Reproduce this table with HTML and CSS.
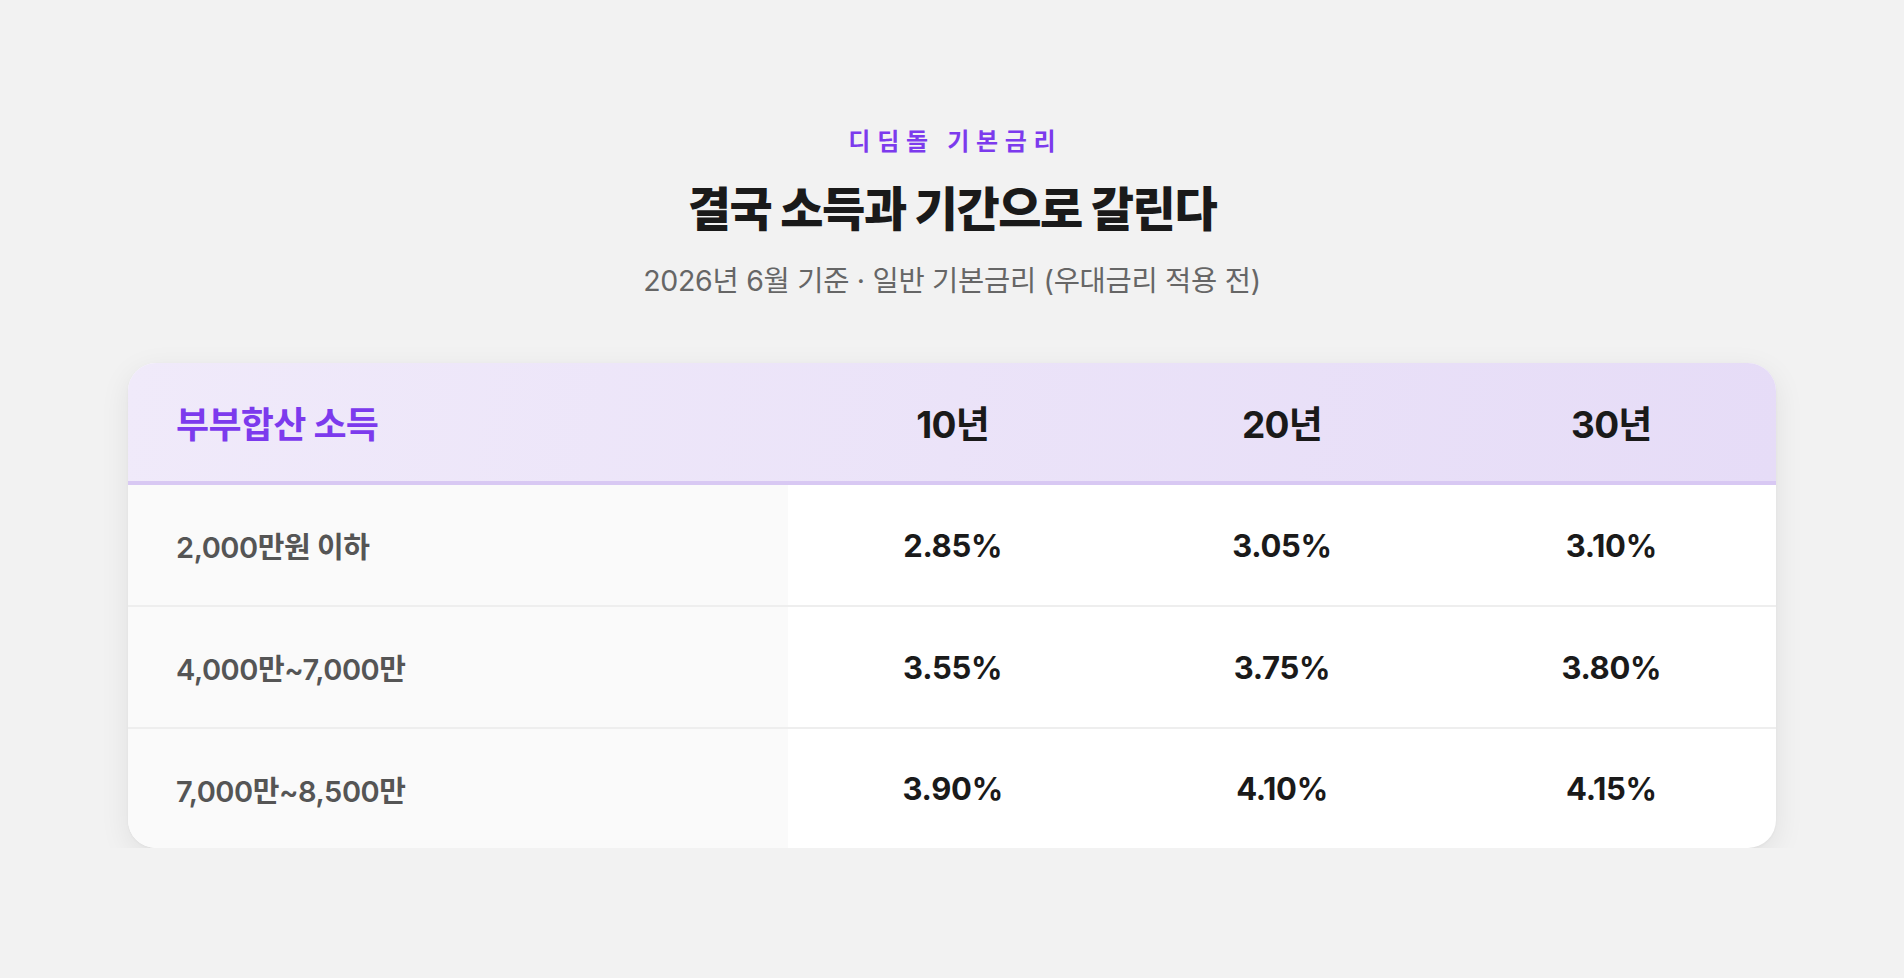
FILE: index.html
```html
<!DOCTYPE html>
<html lang="ko">
<head>
<meta charset="utf-8">
<title>디딤돌 기본금리</title>
<link rel="stylesheet" href="styles.css">
</head>
<body>
<main class="page">
  <header class="intro">
    <p class="eyebrow">디딤돌 기본금리</p>
    <h1 class="title">결국 소득과 기간으로 갈린다</h1>
    <p class="subtitle">2026년 6월 기준 · 일반 기본금리 (우대금리 적용 전)</p>
  </header>
  <section class="card">
    <div class="row head">
      <div class="cell label">부부합산 소득</div>
      <div class="cell">10년</div>
      <div class="cell">20년</div>
      <div class="cell">30년</div>
    </div>
    <div class="row">
      <div class="cell label">2,000만원 이하</div>
      <div class="cell">2.85%</div>
      <div class="cell">3.05%</div>
      <div class="cell">3.10%</div>
    </div>
    <div class="row">
      <div class="cell label">4,000만~7,000만</div>
      <div class="cell">3.55%</div>
      <div class="cell">3.75%</div>
      <div class="cell">3.80%</div>
    </div>
    <div class="row last">
      <div class="cell label">7,000만~8,500만</div>
      <div class="cell">3.90%</div>
      <div class="cell">4.10%</div>
      <div class="cell">4.15%</div>
    </div>
  </section>
</main>
</body>
</html>
```

FILE: styles.css
```css
* { box-sizing: border-box; }
html, body {
  margin: 0;
  padding: 0;
  background: #f2f2f2;
}
body {
  font-family: Inter, "Noto Sans CJK KR", sans-serif;
  color: #1a1a1a;
}
.page {
  padding: 129px 128px 0;
  display: flex;
  flex-direction: column;
  align-items: center;
}
.intro {
  display: flex;
  flex-direction: column;
  align-items: center;
}
.eyebrow {
  margin: 0;
  font-size: 24px;
  line-height: 25px;
  font-weight: 700;
  letter-spacing: 0.28em;
  color: #7c3aed;
  padding-left: 0.28em;
}
.title {
  margin: 30px 0 0;
  font-size: 47px;
  line-height: 50px;
  font-weight: 800;
  letter-spacing: -0.03em;
  color: #1a1a1a;
}
.subtitle {
  margin: 31px 0 0;
  font-size: 28.5px;
  line-height: 32px;
  font-weight: 400;
  color: #666666;
  letter-spacing: -0.01em;
}
.card {
  margin-top: 66px;
  width: 1648px;
  background: #ffffff;
  border-radius: 28px;
  overflow: hidden;
  box-shadow: 0 8px 30px rgba(0, 0, 0, 0.08), 0 1px 3px rgba(0, 0, 0, 0.04);
}
.row {
  display: grid;
  grid-template-columns: 660px 1fr 1fr 1fr;
  height: 122px;
  border-bottom: 2px solid #eeeeee;
}
.row.last {
  height: 119px;
  border-bottom: none;
}
.row.head {
  height: 122px;
  background: linear-gradient(100deg, #f0eafa 0%, #e6dcf7 100%);
  border-bottom: 4px solid #d8c8f3;
}
.cell {
  display: flex;
  align-items: center;
  justify-content: center;
  font-size: 31px;
  font-weight: 700;
  color: #1a1a1a;
  letter-spacing: -0.01em;
}
.cell.label {
  justify-content: flex-start;
  padding-left: 48px;
  background: #fafafa;
  font-size: 29px;
  font-weight: 600;
  color: #555555;
  letter-spacing: -0.015em;
}
.row.head .cell {
  font-size: 37px;
  font-weight: 700;
  background: transparent;
  letter-spacing: -0.02em;
}
.row.head .cell.label {
  font-size: 36px;
  color: #7c3aed;
}
```
